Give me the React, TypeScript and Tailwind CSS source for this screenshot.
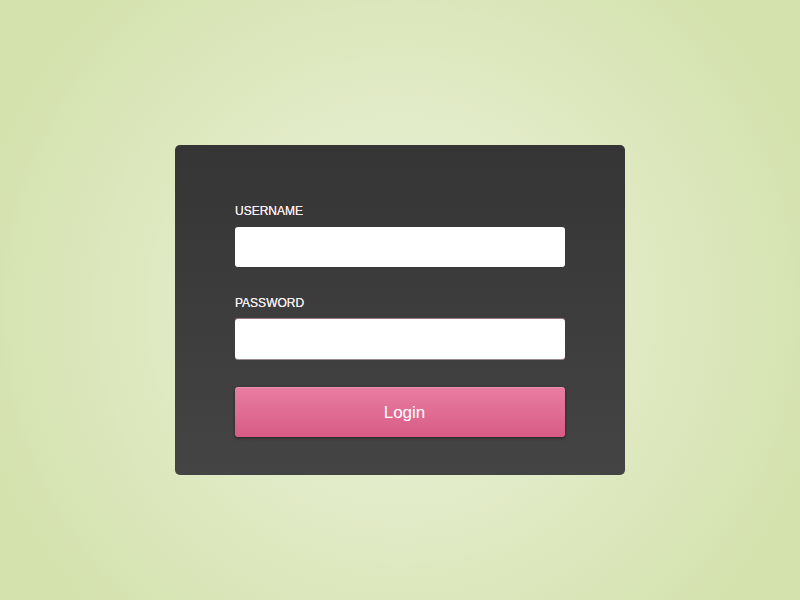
export default function App() {
  return (
    <div
      className="min-h-screen w-full flex justify-center pt-[145px] font-['Liberation_Sans',Arial,sans-serif]"
      style={{ background: "radial-gradient(ellipse 430px 430px at 400px 310px, #eaf1d9 0%, #e3ecca 40%, #d4e2ae 100%)" }}
    >
      <div className="w-[450px] h-[330px] rounded-[5px] bg-gradient-to-b from-[#353535] to-[#444444] pl-[60px] pr-[60px] pt-[59px]">
        <label className="block text-[12px] leading-[15px] font-normal text-[#f8edf0] [text-shadow:0_0_0.4px_#f8edf0] mb-[8px]">USERNAME</label>
        <input type="text" className="block w-[330px] h-[40px] rounded-[3px] bg-white border-0 outline-none" />
        <label className="block text-[12px] leading-[15px] font-normal text-[#f8edf0] [text-shadow:0_0_0.4px_#f8edf0] mt-[29px] mb-[8px]">PASSWORD</label>
        <input type="password" className="block w-[330px] h-[40px] rounded-[3px] bg-white border-0 outline-none shadow-[0_-1px_0_#9b7c86,0_1px_0_#9b8a90]" />
        <button className="mt-[28px] w-[330px] h-[50px] rounded-[3px] bg-gradient-to-b from-[#e97da1] to-[#d75b86] text-white text-[17px] pl-[9px] shadow-[0_1px_3px_rgba(0,0,0,0.5)] border-t border-[#ec8fb0]">
          Login
        </button>
      </div>
    </div>
  );
}
